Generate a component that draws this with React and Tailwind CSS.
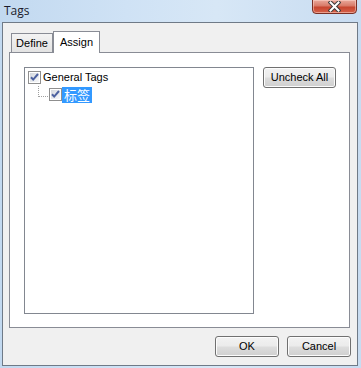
import React from "react";

function CheckBox() {
  return (
    <svg width="13" height="13" viewBox="0 0 13 13" className="shrink-0">
      <defs>
        <linearGradient id="cbg" x1="0" y1="0" x2="1" y2="1">
          <stop offset="0" stopColor="#d4d8de" />
          <stop offset="1" stopColor="#f7f8fa" />
        </linearGradient>
      </defs>
      <rect x="0.5" y="0.5" width="12" height="12" fill="#fff" stroke="#8f8f8f" />
      <rect x="2" y="2" width="9" height="9" fill="url(#cbg)" />
      <path d="M3 6.2 L5.2 8.6 L10 3" fill="none" stroke="#4c61a0" strokeWidth="2" />
    </svg>
  );
}

function WinButton({ children, className = "" }) {
  return (
    <div
      className={`h-[21px] flex items-center justify-center rounded-[3px] border border-[#707070] bg-[linear-gradient(#f2f2f2_0%,#ebebeb_48%,#dddddd_52%,#cfcfcf_100%)] shadow-[inset_0_0_0_1px_#fcfcfc] text-black text-[11px] ${className}`}
    >
      {children}
    </div>
  );
}

export default function App() {
  return (
    <div className="w-[361px] h-[368px] flex flex-col bg-[linear-gradient(90deg,#c2d9f0_0%,#cfe2f5_35%,#d7e7f6_60%,#c8dcf1_100%)] font-['Liberation_Sans',sans-serif] select-none">
      {/* title bar */}
      <div className="h-[22px] flex items-start justify-between pl-[4px] pr-[4px] shrink-0">
        <span className="mt-[3px] text-[12px] text-[#1b1b2b] font-['Open_Sans',sans-serif] leading-[15px]">
          Tags
        </span>
        <div className="w-[45px] h-[15px] -mt-px rounded-b-[4px] border border-[#7a3026] bg-[linear-gradient(#eaa99c_0%,#d87a68_45%,#c7452f_55%,#d5624a_100%)] shadow-[inset_0_0_0_1px_rgba(255,220,210,0.5)] flex items-center justify-center">
          <svg width="13" height="11" viewBox="0 0 13 11">
            <path d="M2.5 1.5 L10.5 9.5 M10.5 1.5 L2.5 9.5" stroke="#3b3b3b" strokeWidth="4" strokeLinecap="square" />
            <path d="M2.5 1.5 L10.5 9.5 M10.5 1.5 L2.5 9.5" stroke="#ffffff" strokeWidth="2" strokeLinecap="square" />
          </svg>
        </div>
      </div>

      {/* client area */}
      <div className="flex-1 ml-[2px] mr-[3px] mb-[2px] border border-[#6f7a87] bg-[#f0f0f0] flex flex-col text-[11px] text-black">
        <div className="pt-[8px] pl-[6px]">
          {/* tabs */}
          <div className="flex items-end h-[21px] pl-[2px]">
            <div className="w-[42px] h-[19px] border border-b-0 border-[#898c95] bg-[linear-gradient(#f3f3f3,#e3e3e3)] flex items-center justify-center pt-px">
              Define
            </div>
            <div className="relative z-10 w-[47px] h-[22px] -mb-px border border-b-0 border-[#898c95] bg-white flex items-center justify-center pb-px">
              Assign
            </div>
          </div>
          {/* panel */}
          <div className="w-[341px] h-[276px] border border-[#898c95] bg-white flex items-start pt-[14px] pl-[14px]">
            <div className="w-[230px] h-[247px] border border-[#828790] bg-white pt-[1px] pl-[3px]">
              <div className="flex items-center h-[17px]">
                <CheckBox />
                <span className="ml-[1px] px-[1px] leading-[15px] text-[11px]">General Tags</span>
              </div>
              <div className="flex items-center h-[17px]">
                <div className="w-[10px] h-[11px] ml-[10px] mr-[1px] self-start border-l border-b border-dotted border-[#a0a0a0]" />
                <CheckBox />
                <span className="px-[2px] h-[16px] leading-[16px] bg-[#3399ff] text-white text-[13px] font-['Noto_Sans_CJK_SC',sans-serif]">
                  标签
                </span>
              </div>
            </div>
            <WinButton className="ml-[9px] w-[73px]">Uncheck All</WinButton>
          </div>
        </div>
        {/* bottom buttons */}
        <div className="flex justify-end gap-[8px] pr-[6px] pt-[8px]">
          <WinButton className="w-[64px]">OK</WinButton>
          <WinButton className="w-[64px]">Cancel</WinButton>
        </div>
      </div>
    </div>
  );
}
